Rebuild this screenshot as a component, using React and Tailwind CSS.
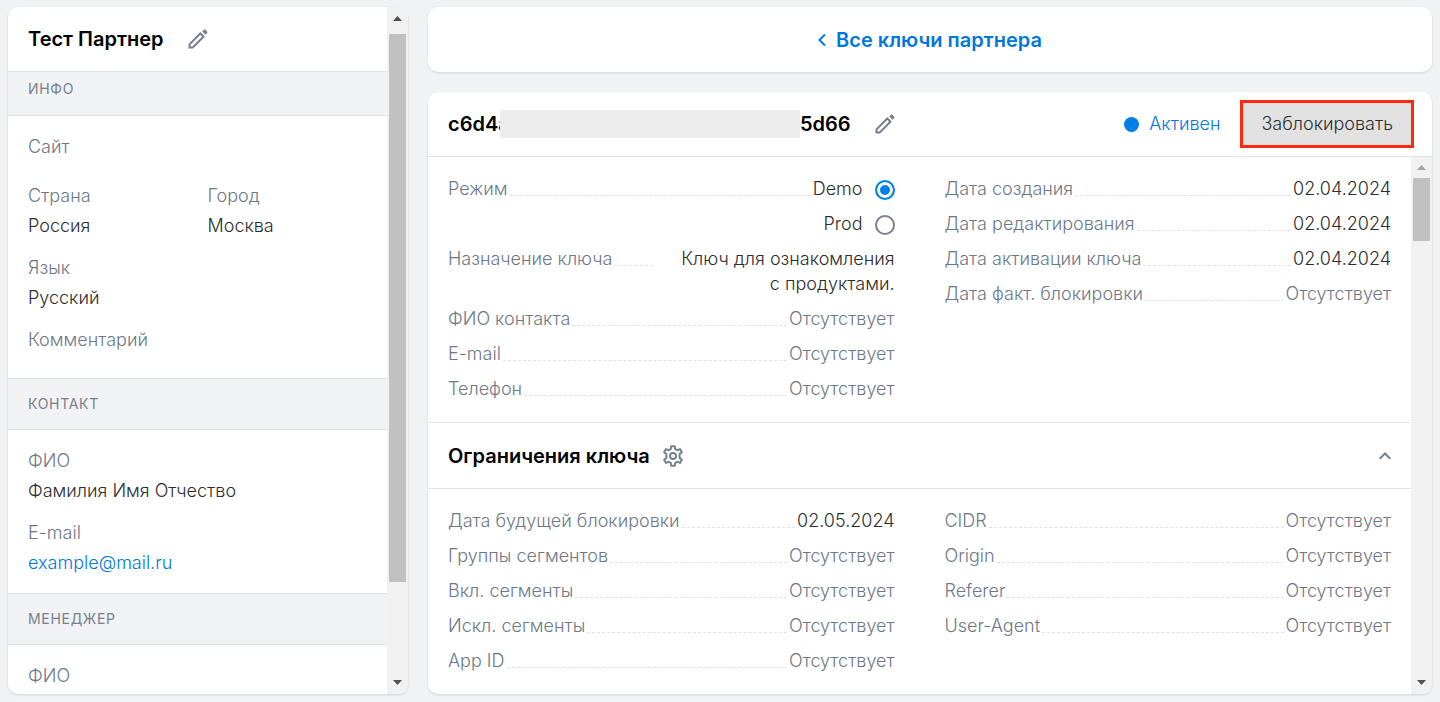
import React, { useState } from "react";

const EMPTY = "Отсутствует";

const KEY_CONTACTS = [
  { label: "ФИО контакта" },
  { label: "E-mail" },
  { label: "Телефон" },
];

const KEY_DATES = [
  { label: "Дата создания", value: "02.04.2024" },
  { label: "Дата редактирования", value: "02.04.2024" },
  { label: "Дата активации ключа", value: "02.04.2024" },
  { label: "Дата факт. блокировки" },
];

const LIMITS_LEFT = [
  { label: "Дата будущей блокировки", value: "02.05.2024" },
  { label: "Группы сегментов" },
  { label: "Вкл. сегменты" },
  { label: "Искл. сегменты" },
  { label: "App ID" },
];

const LIMITS_RIGHT = [
  { label: "CIDR" },
  { label: "Origin" },
  { label: "Referer" },
  { label: "User-Agent" },
];

function PencilIcon() {
  return (
    <svg width="20" height="20" viewBox="0 0 20 20" fill="none">
      <path
        d="M1.500 18.500v-3.200L12.300 4.500l3.200 3.200L4.700 18.500H1.500Z"
        stroke="#76808e"
        strokeWidth="2"
      />
      <path
        d="m14.200 2.500 1.500-1.500c.6-.6 1.300-.6 1.900 0l1.400 1.400c.6.6.6 1.300 0 1.900l-1.500 1.500-3.300-3.300Z"
        fill="#76808e"
      />
    </svg>
  );
}

function GearIcon() {
  return (
    <svg
      width="22"
      height="22"
      viewBox="0 0 22 22"
      fill="none"
      stroke="#76808e"
      strokeWidth="2"
      strokeLinejoin="round"
    >
      <path d="M9.200 1.200h3.600l.5 2.900 2 1.100 2.700-1.100 1.900 3.200-2.300 1.800v3.800l2.300 1.800-1.900 3.200-2.700-1.100-2 1.100-.5 2.900H9.200l-.5-2.900-2-1.100L4 17.900l-1.900-3.200 2.300-1.800V9.100L2.100 7.300 4 4.100l2.700 1.100 2-1.100.5-2.900Z" />
      <circle cx="11" cy="11" r="3" />
    </svg>
  );
}

function Arrow({ up, color = "#505050" }) {
  return (
    <svg width="9" height="5" viewBox="0 0 9 5">
      <path d={up ? "M4.500 0 9 5H0Z" : "M0 0h9L4.500 5Z"} fill={color} />
    </svg>
  );
}

function Scrollbar({ atTop, children }) {
  return (
    <div className="flex w-[21px] shrink-0 flex-col items-center bg-[#f1f1f1]">
      <div
        className={
          atTop
            ? "flex h-[21px] items-center justify-center"
            : "flex h-[27px] items-center justify-center pb-1"
        }
      >
        <Arrow up color={atTop ? "#a3a3a3" : "#505050"} />
      </div>
      <div className="w-full flex-1 px-[2px]">{children}</div>
      <div className="flex h-[23px] items-center justify-center">
        <Arrow />
      </div>
    </div>
  );
}

function IconButton({ label, children }) {
  return (
    <button type="button" aria-label={label} className="cursor-pointer">
      {children}
    </button>
  );
}

function SectionBar({ children }) {
  return (
    <h2 className="flex h-[52px] items-center border-y border-[#e1e3e6] bg-[#f1f2f4] px-5 text-sm font-normal tracking-wider text-[#76808e]">
      {children}
    </h2>
  );
}

function Field({ label, children }) {
  return (
    <div className="flex-1 leading-[30px]">
      <dt className="text-[#6d7885]">{label}</dt>
      <dd>{children}</dd>
    </div>
  );
}

function Row({ label, children }) {
  return (
    <div className="flex items-start pb-[10px] leading-[25px]">
      <dt className="text-[#6d7885]">{label}</dt>
      <dd className="contents">
        <span className="mx-[2px] h-5 flex-1 border-b border-dashed border-[#dfe1e4]" />
        {children}
      </dd>
    </div>
  );
}

function Rows({ items }) {
  return items.map((item) => (
    <Row key={item.label} label={item.label}>
      <span className={item.value ? "" : "text-[#6d7885]"}>
        {item.value || EMPTY}
      </span>
    </Row>
  ));
}

function ModeRadio({ value, mode, onChange }) {
  return (
    <label className="flex items-start justify-end gap-3">
      {value}
      <input
        type="radio"
        name="mode"
        value={value}
        checked={mode === value}
        onChange={() => onChange(value)}
        className="mt-1 size-5 appearance-none rounded-full border-2 border-[#76808e] checked:border-[#0080e5] checked:bg-[#0080e5] checked:shadow-[inset_0_0_0_3px_#fff]"
      />
    </label>
  );
}

function PartnerPanel() {
  return (
    <aside className="flex w-[400px] shrink-0 overflow-hidden rounded-[10px] bg-white shadow">
      <div className="min-w-0 flex-1 overflow-hidden">
        <header className="flex h-16 items-center gap-6 px-5">
          <h1 className="text-xl font-semibold text-black">Тест Партнер</h1>
          <IconButton label="Редактировать партнера">
            <PencilIcon />
          </IconButton>
        </header>
        <h2 className="h-[45px] border-y border-[#e1e3e6] bg-[#f1f2f4] px-5 pt-[7px] text-sm font-normal tracking-wider text-[#76808e]">
          ИНФО
        </h2>
        <dl className="flex flex-col gap-3 px-5 pt-4 pb-[23px]">
          <Field label="Сайт" />
          <div className="flex gap-5 pt-[7px]">
            <Field label="Страна">Россия</Field>
            <Field label="Город">Москва</Field>
          </div>
          <Field label="Язык">Русский</Field>
          <Field label="Комментарий" />
        </dl>
        <SectionBar>КОНТАКТ</SectionBar>
        <dl className="flex flex-col gap-3 px-5 pt-4 pb-[15px]">
          <Field label="ФИО">Фамилия Имя Отчество</Field>
          <Field label="E-mail">
            <a href="mailto:example@mail.ru" className="text-[#0077db]">
              example@mail.ru
            </a>
          </Field>
        </dl>
        <SectionBar>МЕНЕДЖЕР</SectionBar>
        <dl className="px-5 pt-4">
          <Field label="ФИО" />
        </dl>
      </div>
      <Scrollbar>
        <div className="h-[86%] bg-[#c1c1c1]" />
      </Scrollbar>
    </aside>
  );
}

function KeyPanel() {
  const [mode, setMode] = useState("Demo");
  const [open, setOpen] = useState(true);

  return (
    <section className="flex min-h-0 flex-1 flex-col overflow-hidden rounded-[10px] bg-white shadow">
      <header className="flex h-[65px] shrink-0 items-center border-b border-[#e1e3e6] pr-[18px] pl-5">
        {/* the middle of the key is always masked */}
        <h1 className="mr-6 flex items-center text-xl font-semibold text-black">
          <span className="w-[52px]">c6d4a</span>
          <span className="relative h-7 w-[300px] bg-[#ececec]" />
          <span>5d66</span>
        </h1>
        <IconButton label="Редактировать ключ">
          <PencilIcon />
        </IconButton>
        <span className="ml-auto size-[15px] rounded-full bg-[#0080e5]" />
        <span className="mr-5 ml-[10px] text-[#0077db]">Активен</span>
        <button
          type="button"
          className="h-12 cursor-pointer border-[3px] border-[#ff2a0d] bg-[#e1e1e1] px-[18px]"
        >
          Заблокировать
        </button>
      </header>
      <div className="flex min-h-0 flex-1">
        <div className="min-w-0 flex-1 overflow-hidden">
          <div className="grid grid-cols-2 gap-[50px] px-5 pt-[19px] pb-[11px]">
            <dl>
              <Row label="Режим">
                <span className="flex flex-col gap-[10px]">
                  <ModeRadio value="Demo" mode={mode} onChange={setMode} />
                  <ModeRadio value="Prod" mode={mode} onChange={setMode} />
                </span>
              </Row>
              <Row label="Назначение ключа">
                <span className="w-[240px] text-right">
                  Ключ для ознакомления
                  <br />с продуктами.
                </span>
              </Row>
              <Rows items={KEY_CONTACTS} />
            </dl>
            <dl>
              <Rows items={KEY_DATES} />
            </dl>
          </div>
          <div className="flex h-[67px] items-center gap-3 border-y border-[#e1e3e6] px-5">
            <h2 className="text-xl font-semibold text-black">
              Ограничения ключа
            </h2>
            <IconButton label="Настроить ограничения">
              <GearIcon />
            </IconButton>
            <button
              type="button"
              aria-label="Свернуть"
              aria-expanded={open}
              onClick={() => setOpen(!open)}
              className="ml-auto cursor-pointer"
            >
              <svg
                width="12"
                height="8"
                viewBox="0 0 12 8"
                fill="none"
                className={open ? "" : "rotate-180"}
              >
                <path d="m.700 6.800L6 1.500l5.300 5.300" stroke="#76808e" strokeWidth="2" />
              </svg>
            </button>
          </div>
          {open && (
            <div className="grid grid-cols-2 gap-[50px] px-5 pt-[19px]">
              <dl>
                <Rows items={LIMITS_LEFT} />
              </dl>
              <dl>
                <Rows items={LIMITS_RIGHT} />
              </dl>
            </div>
          )}
        </div>
        <Scrollbar atTop>
          <div className="h-[63px] bg-[#c1c1c1]" />
        </Scrollbar>
      </div>
    </section>
  );
}

export default function App() {
  return (
    <div className="flex h-screen gap-5 bg-[#f1f2f4] px-2 pt-[7px] pb-2 font-['Inter',sans-serif] text-lg font-light text-[#2c2d2e]">
      <PartnerPanel />
      <main className="flex min-w-0 flex-1 flex-col gap-5">
        <nav className="flex h-[65px] shrink-0 items-center justify-center rounded-[10px] bg-white shadow">
          <a
            href="#keys"
            className="flex items-center gap-[10px] text-xl font-semibold text-[#0077db]"
          >
            <svg width="8" height="14" viewBox="0 0 8 14" fill="none">
              <path d="M7 1.500 1.500 7 7 12.500" stroke="currentColor" strokeWidth="2" />
            </svg>
            Все ключи партнера
          </a>
        </nav>
        <KeyPanel />
      </main>
    </div>
  );
}
